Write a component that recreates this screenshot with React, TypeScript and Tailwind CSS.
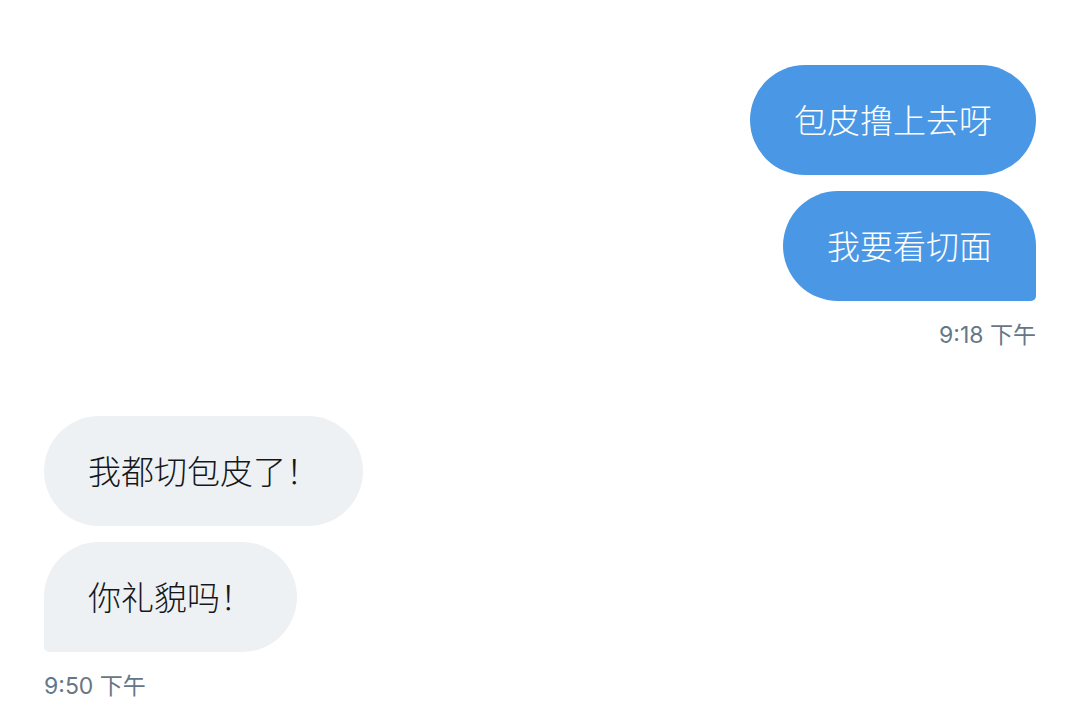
import React from "react";

type Msg = { text: string; last?: boolean };

const cjk = "font-['Inter','Noto_Sans_CJK_SC',sans-serif]";

const Bubble = ({ text, mine, last }: Msg & { mine: boolean }) => {
  const color = mine ? "bg-[#4a98e5] text-white" : "bg-[#eef1f3] text-[#14171a]";
  const tail = last ? (mine ? "rounded-br-[5px]" : "rounded-bl-[5px]") : "";
  return (
    <div
      className={`rounded-[55px] ${tail} ${color} h-[110px] px-[44px] pt-[3px] flex items-center text-[33px] font-light leading-none ${cjk}`}
    >
      {text}
    </div>
  );
};

const Group = ({ mine, msgs, time }: { mine: boolean; msgs: Msg[]; time: string }) => (
  <div className={`flex flex-col gap-4 ${mine ? "items-end" : "items-start"}`}>
    {msgs.map((m, i) => (
      <Bubble key={i} text={m.text} mine={mine} last={i === msgs.length - 1} />
    ))}
    <div className={`mt-[7px] text-[23px] leading-none text-[#657786] ${cjk}`}>{time}</div>
  </div>
);

const App = () => {
  return (
    <div className="w-[1080px] h-[720px] bg-white px-[44px] pt-[65px] flex flex-col gap-[69px] overflow-hidden">
      <Group
        mine
        msgs={[{ text: "包皮撸上去呀" }, { text: "我要看切面" }]}
        time="9:18 下午"
      />
      <Group
        mine={false}
        msgs={[{ text: "我都切包皮了！" }, { text: "你礼貌吗！" }]}
        time="9:50 下午"
      />
    </div>
  );
};

export default App;
